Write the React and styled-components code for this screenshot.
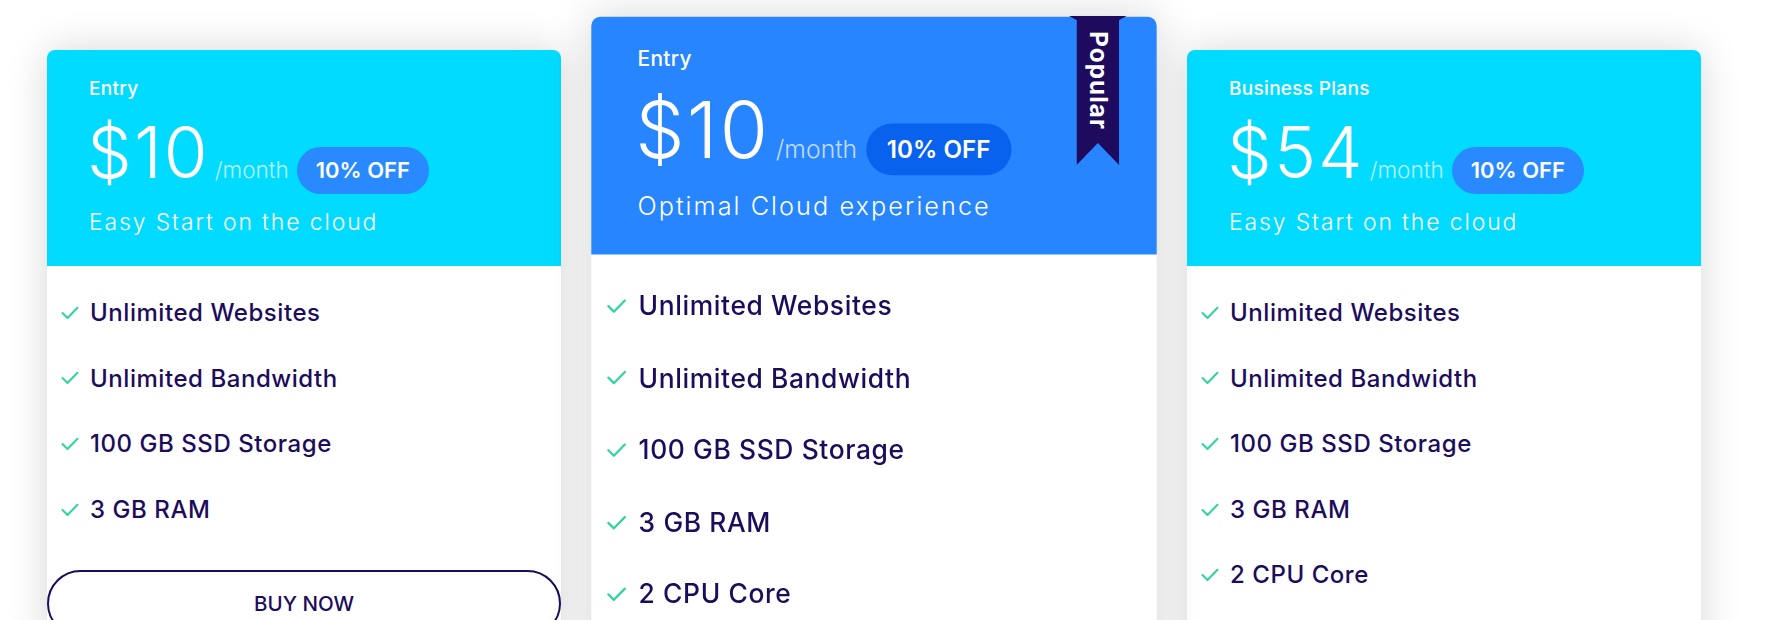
import React from 'react';
import styled, { createGlobalStyle, css } from 'styled-components';

const GlobalStyle = createGlobalStyle`
  * {
    box-sizing: border-box;
  }
  body {
    margin: 0;
    background: #fff;
    font-family: Inter, 'Noto Sans', 'Liberation Sans', sans-serif;
    overflow: hidden;
  }
`;

const plans = [
  {
    id: 'entry',
    name: 'Entry',
    price: 10,
    tagline: 'Easy Start on the cloud',
    features: ['Unlimited Websites', 'Unlimited Bandwidth', '100 GB SSD Storage', '3 GB RAM'],
  },
  {
    id: 'entry-popular',
    name: 'Entry',
    price: 10,
    tagline: 'Optimal Cloud experience',
    popular: true,
    features: [
      'Unlimited Websites',
      'Unlimited Bandwidth',
      '100 GB SSD Storage',
      '3 GB RAM',
      '2 CPU Core',
    ],
  },
  {
    id: 'business',
    name: 'Business Plans',
    price: 54,
    tagline: 'Easy Start on the cloud',
    features: [
      'Unlimited Websites',
      'Unlimited Bandwidth',
      '100 GB SSD Storage',
      '3 GB RAM',
      '2 CPU Core',
    ],
  },
];

const CheckIcon = () => (
  <svg width="18" height="14" viewBox="0 0 18 14" fill="none">
    <polyline
      points="1.5,7 6.5,12 16.5,1.8"
      stroke="#2fd39f"
      strokeWidth="2"
      strokeLinecap="round"
      strokeLinejoin="round"
    />
  </svg>
);

const PlanCard = ({ plan }) => {
  const { name, price, tagline, features, popular } = plan;
  return (
    <Card $popular={popular}>
      <Header $popular={popular}>
        <PlanName>{name}</PlanName>
        <PriceRow>
          <Price>${price}</Price>
          <Period>/month</Period>
          <Discount $popular={popular}>10% OFF</Discount>
        </PriceRow>
        <Tagline>{tagline}</Tagline>
      </Header>
      {popular && (
        <Ribbon>
          <RibbonBody>Popular</RibbonBody>
        </Ribbon>
      )}
      <Features>
        {features.map((f) => (
          <Feature key={f}>
            <CheckIcon />
            <span>{f}</span>
          </Feature>
        ))}
      </Features>
      <BuyButton>BUY NOW</BuyButton>
    </Card>
  );
};

const App = () => (
  <>
    <GlobalStyle />
    <Pricing>
      {plans.map((p) => (
        <PlanCard key={p.id} plan={p} />
      ))}
    </Pricing>
  </>
);

const Pricing = styled.section`
  display: flex;
  align-items: flex-start;
  gap: 56px;
  padding: 50px 0 0 47px;
`;

const Card = styled.div`
  position: relative;
  width: 514px;
  flex-shrink: 0;
  background: #fff;
  border-radius: 8px;
  box-shadow: 0 0 40px rgba(0, 0, 0, 0.16);
  padding-bottom: 10px;
  ${({ $popular }) =>
    $popular &&
    css`
      transform: scale(1.1);
      z-index: 1;
    `}
`;

const Header = styled.div`
  background: ${({ $popular }) => ($popular ? '#2785ff' : '#00dbff')};
  color: #fff;
  border-radius: 8px 8px 0 0;
  padding: 28px 42px 29px;
  height: 216px;
`;

const PlanName = styled.div`
  font-size: 19px;
  line-height: 21.6px;
  font-weight: 500;
  letter-spacing: 0.3px;
`;

const PriceRow = styled.div`
  display: flex;
  align-items: baseline;
  margin-top: 17px;
`;

const Price = styled.span`
  margin-left: -2px;
  font-size: 71px;
  line-height: 70px;
  font-weight: 300;
  letter-spacing: 2px;
`;

const Period = styled.span`
  margin-left: 5px;
  font-size: 22.5px;
  font-weight: 300;
  color: rgba(255, 255, 255, 0.72);
`;

const Discount = styled.span`
  margin-left: 8px;
  padding: 0 19px;
  height: 47px;
  line-height: 47px;
  border-radius: 24px;
  font-size: 22px;
  font-weight: 600;
  background: ${({ $popular }) => ($popular ? '#0862ee' : '#2989ff')};
`;

const Tagline = styled.div`
  margin-top: 12px;
  font-size: 23px;
  line-height: 32px;
  font-weight: 300;
  letter-spacing: 1.85px;
`;

const Ribbon = styled.div`
  position: absolute;
  top: 0;
  right: 34px;
  width: 39px;
  &::before {
    content: '';
    position: absolute;
    top: -1px;
    left: -7px;
    right: -7px;
    height: 4px;
    background: #1e0b5e;
    clip-path: polygon(0 0, 100% 0, 86% 100%, 14% 100%);
  }
`;

const RibbonBody = styled.div`
  height: 135px;
  background: #1e0b5e;
  clip-path: polygon(0 0, 100% 0, 100% 100%, 50% 85%, 0 100%);
  color: #fff;
  writing-mode: vertical-rl;
  font-size: 22px;
  font-weight: 700;
  letter-spacing: 1px;
  line-height: 39px;
  padding-top: 13px;
`;

const Features = styled.ul`
  list-style: none;
  margin: 0;
  padding: 14px 0 0 14px;
`;

const Feature = styled.li`
  display: flex;
  align-items: center;
  gap: 11px;
  padding: 16px 0;
  font-size: 24px;
  line-height: 33.6px;
  font-weight: 450;
  letter-spacing: 0.55px;
  color: #1d0c5c;
  svg {
    flex-shrink: 0;
  }
`;

const BuyButton = styled.button`
  display: block;
  width: 100%;
  height: 67px;
  margin-top: 28px;
  border: 2px solid #1d0c5c;
  border-radius: 40px;
  background: transparent;
  color: #1d0c5c;
  font-family: inherit;
  font-size: 20.5px;
  font-weight: 500;
  cursor: pointer;
`;

export default App;
